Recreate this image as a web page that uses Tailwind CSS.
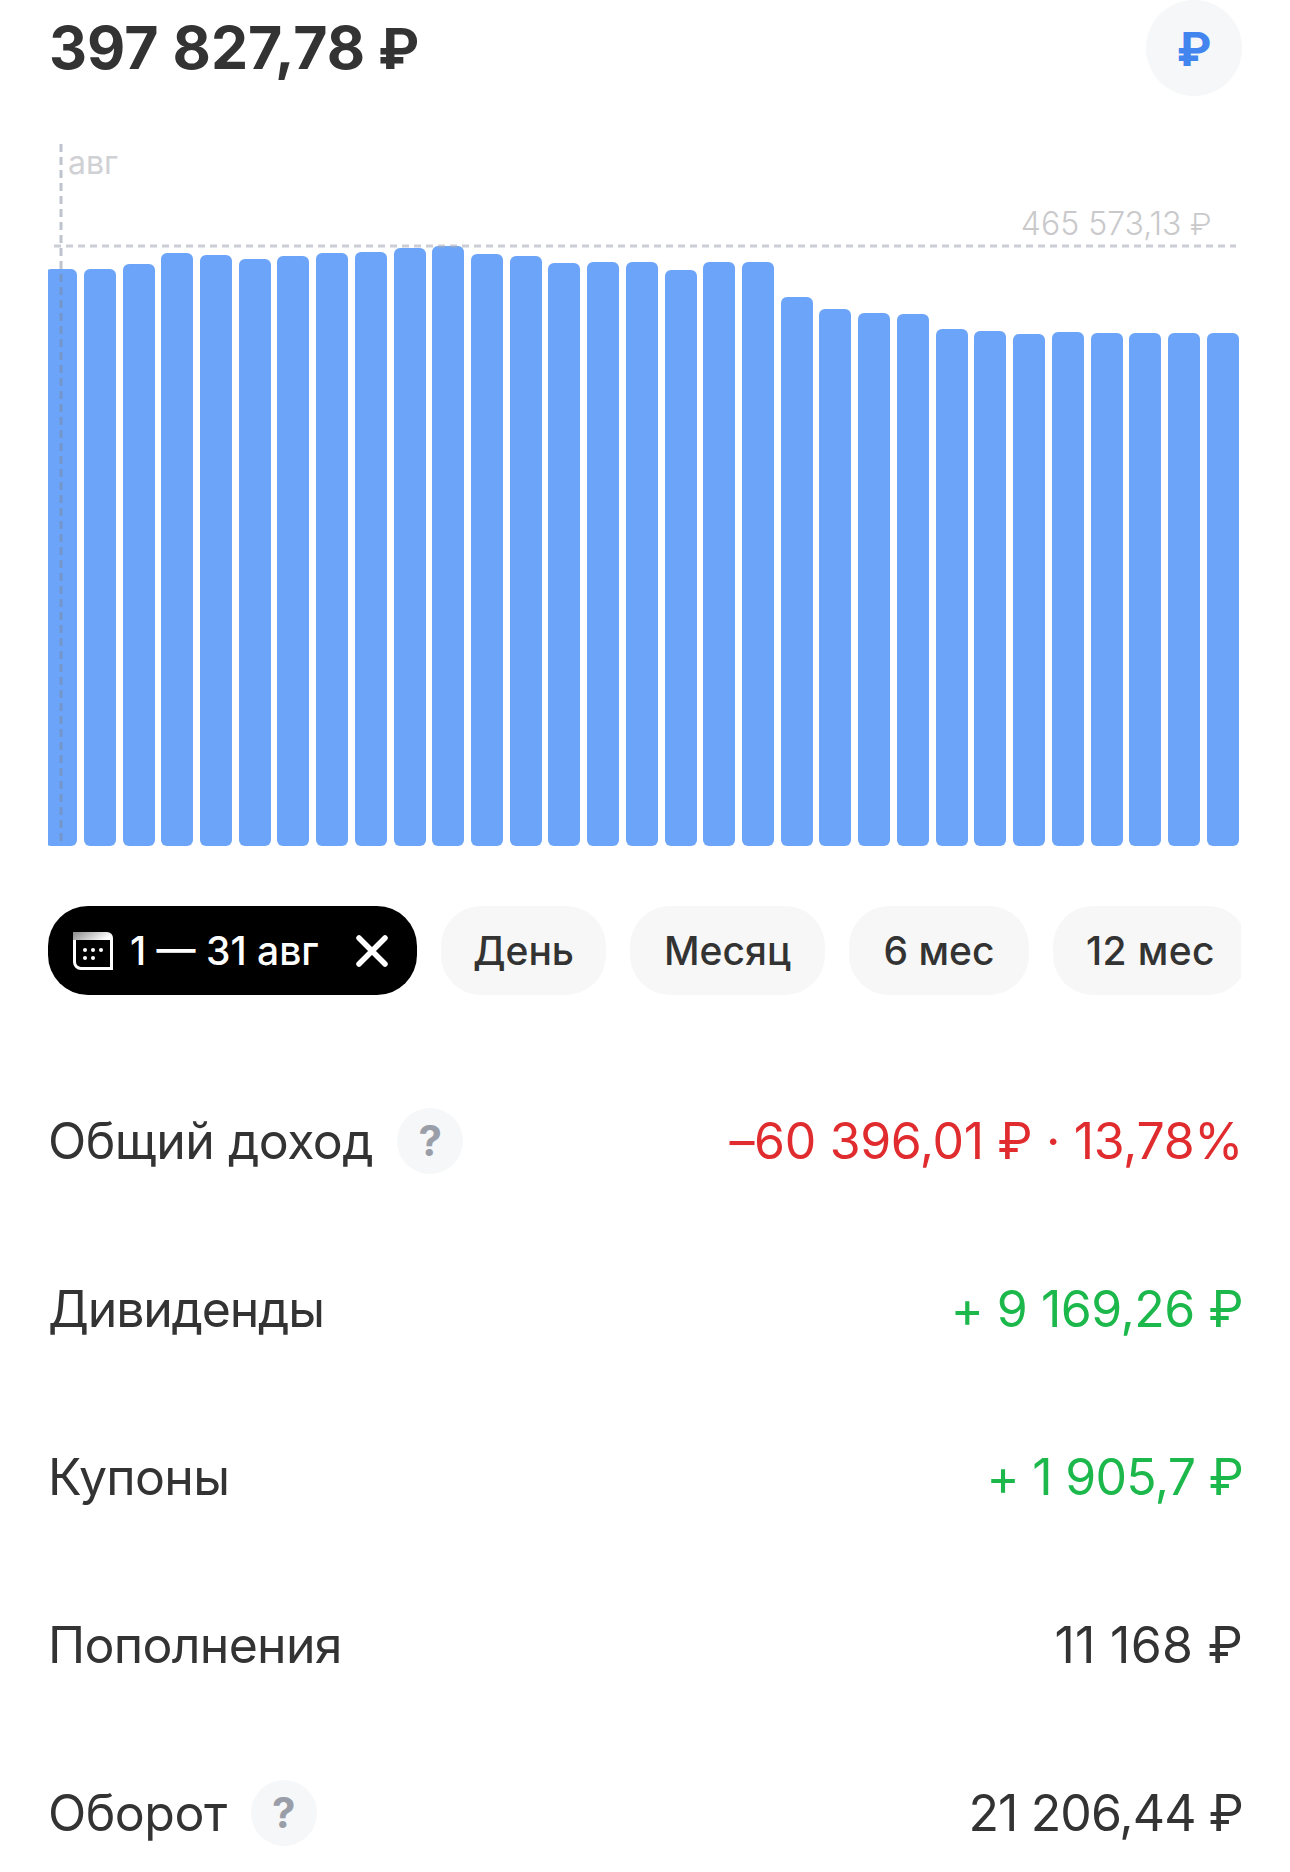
<!DOCTYPE html>
<html lang="ru">
<head>
    <meta charset="UTF-8">
    <meta name="viewport" content="width=device-width, initial-scale=1.0">
    <title>Доходность</title>
    <script src="https://cdn.jsdelivr.net/npm/@tailwindcss/browser@4"></script>
</head>
<body class="bg-white font-[Inter,sans-serif] text-[#333333]">
    <div class="w-[1290px] h-[1872px] overflow-hidden pl-[48px] pr-[49px]">
        <!-- Header -->
        <div class="flex justify-between h-[96px] -mr-[1px]">
            <div class="text-[59px] leading-[96px] font-bold pl-[1px]">397 827,78 <span class="font-[Roboto,sans-serif] text-[57px]">₽</span></div>
            <div class="w-[96px] h-[96px] pt-[3px] pl-[1px] rounded-full bg-[#f6f7f8] flex items-center justify-center text-[48px] font-bold text-[#4385ef] font-[Roboto,sans-serif]">₽</div>
        </div>

        <!-- Chart -->
        <div class="relative h-[750px]">
            <div id="bars" class="absolute inset-0 overflow-hidden flex items-end gap-[6.72px] -ml-[2.9px] [clip-path:inset(0_0_0_2.9px)]"></div>
            <svg class="absolute left-[11px] top-[48px]" width="4" height="702"><line x1="2" y1="0" x2="2" y2="702" stroke="#7d879c" stroke-opacity="0.5" stroke-width="3" stroke-dasharray="8 5"/></svg>
            <svg class="absolute left-[6px] top-[148px]" width="1182" height="4"><line x1="0" y1="2" x2="1182" y2="2" stroke="#a8adb8" stroke-opacity="0.6" stroke-width="3" stroke-dasharray="7 5"/></svg>
            <div class="absolute left-[20px] top-[47px] text-[32px] leading-[40px] text-[#d0d1d4]">авг</div>
            <div class="absolute right-[30px] top-[108px] text-[32px] leading-[40px] font-light text-[#c9c9cb]">465 573,13 <span class="font-[Roboto,sans-serif]">₽</span></div>
        </div>

        <!-- Period chips -->
        <div class="flex gap-[24px] overflow-hidden mt-[60px] text-[39px] leading-[46px] font-medium">
            <div class="shrink-0 h-[89px] w-[369px] rounded-[40px] bg-black text-white flex items-center pl-[25px]">
                <svg class="shrink-0" width="40" height="38" viewBox="0 0 40 38">
                    <defs><linearGradient id="calTop" x1="0" y1="0" x2="1" y2="0.3"><stop offset="0" stop-color="#8a8a8a"/><stop offset="1" stop-color="#ffffff"/></linearGradient></defs>
                    <path d="M0 0H34a6 6 0 0 1 6 6V8H0Z" fill="url(#calTop)"/>
                    <path d="M1.500 8V30a6.500 6.500 0 0 0 6.500 6.500H38.500V8" fill="none" stroke="#fff" stroke-width="3"/>
                    <g fill="#fff"><circle cx="12" cy="18" r="2"/><circle cx="20" cy="18" r="2"/><circle cx="28" cy="18" r="2"/><circle cx="12" cy="26" r="2"/><circle cx="20" cy="26" r="2"/></g>
                </svg>
                <span class="ml-[17px] whitespace-nowrap">1 — 31 авг</span>
                <svg class="ml-[36px] shrink-0" width="34" height="34" viewBox="0 0 34 34"><path d="M4 4L30 30M30 4L4 30" stroke="#fff" stroke-width="5.500" stroke-linecap="round"/></svg>
            </div>
            <div class="shrink-0 h-[89px] w-[165px] rounded-[40px] bg-[#f7f7f7] flex items-center justify-center">День</div>
            <div class="shrink-0 h-[89px] w-[195px] rounded-[40px] bg-[#f7f7f7] flex items-center justify-center">Месяц</div>
            <div class="shrink-0 h-[89px] w-[180px] rounded-[40px] bg-[#f7f7f7] flex items-center justify-center">6 мес</div>
            <div class="shrink-0 h-[89px] w-[195px] rounded-[40px] bg-[#f7f7f7] flex items-center pl-[33px] tracking-[0.4px]">12 мес</div>
        </div>

        <!-- Totals -->
        <div class="mt-[62px] text-[50px] leading-[60px] -mr-[2px]">
            <div class="flex items-center justify-between h-[168px]">
                <div class="flex items-center gap-[24px]">
                    <span class="tracking-[-0.5px]">Общий доход</span>
                    <span class="w-[66px] h-[66px] rounded-full bg-[#f6f7f8] flex items-center justify-center text-[42px] font-bold text-[#9a9ea8]">?</span>
                </div>
                <span class="text-[#e02c2e] tracking-[-0.35px]">–60 396,01 ₽ · 13,78%</span>
            </div>
            <div class="flex items-center justify-between h-[168px]">
                <span class="tracking-[-1.2px]">Дивиденды</span>
                <span class="text-[#1cb84b] tracking-[-0.5px]">+ 9 169,26 ₽</span>
            </div>
            <div class="flex items-center justify-between h-[168px]">
                <span class="tracking-[-0.7px]">Купоны</span>
                <span class="text-[#1cb84b] tracking-[-0.7px]">+ 1 905,7 ₽</span>
            </div>
            <div class="flex items-center justify-between h-[168px]">
                <span class="tracking-[-0.7px]">Пополнения</span>
                <span class="tracking-[0.3px]">11 168 ₽</span>
            </div>
            <div class="flex items-center justify-between h-[168px]">
                <div class="flex items-center gap-[24px]">
                    <span class="tracking-[-0.5px]">Оборот</span>
                    <span class="w-[66px] h-[66px] rounded-full bg-[#f6f7f8] flex items-center justify-center text-[42px] font-bold text-[#9a9ea8]">?</span>
                </div>
                <span class="tracking-[-0.9px]">21 206,44 ₽</span>
            </div>
        </div>
    </div>

    <script>
        // top edge of each day's bar, page pixels
        const barTops = [269, 269, 264, 253, 255, 259, 256, 253, 252, 248, 246, 254, 256, 263, 262, 262,
            270, 262, 262, 297, 309, 313, 314, 329, 331, 334, 332, 333, 333, 333, 333];
        const bars = document.getElementById('bars');
        barTops.forEach(top => {
            const bar = document.createElement('div');
            bar.className = 'w-[32px] shrink-0 rounded-[6px] bg-[#6ca4f9]';
            bar.style.height = (846 - top) + 'px';
            bars.appendChild(bar);
        });
    </script>
</body>
</html>
